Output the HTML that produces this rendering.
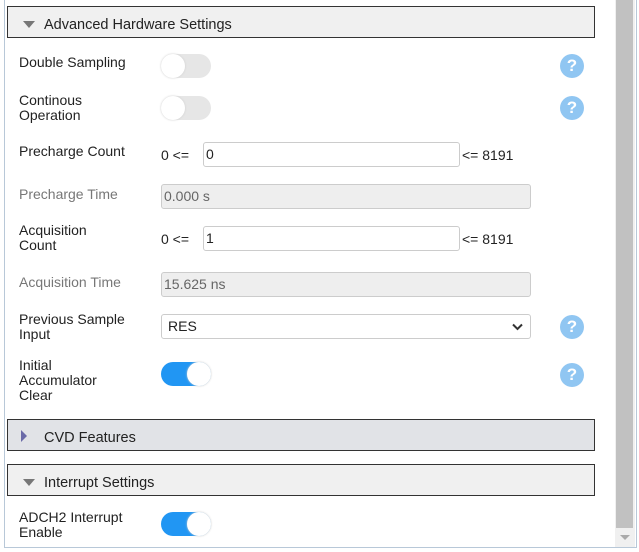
<!DOCTYPE html>
<html><head><style>
body{margin:0;width:639px;height:552px;background:#fff;position:relative;overflow:hidden;font-family:"Liberation Sans",sans-serif;font-size:14px;color:#222}
.a{position:absolute}
.hdr{position:absolute;left:7px;width:586px;height:30px;border:1px solid #333;background:#f0f0f0}
.hdr span{position:absolute;left:36px;top:10px;font-size:14.5px}
.tri{position:absolute;left:15px;top:14px;width:0;height:0;border-left:6px solid transparent;border-right:6px solid transparent;border-top:7px solid #777}
.lbl{position:absolute;left:19px;line-height:15px;font-size:14px}
.dis{color:#777}
.tg{position:absolute;left:161px;width:50px;height:24px;border-radius:12px;background:#e6e6e6}
.tg::after{content:"";position:absolute;left:0;top:0;width:24px;height:24px;border-radius:50%;background:#fff;box-shadow:0 0 2px #ccc}
.tg.on{background:#2196f3}
.tg.on::after{left:26px}
.q{position:absolute;left:560px;width:24px;height:24px;border-radius:50%;background:#90c6f2;color:#fff;font-weight:bold;font-size:17px;text-align:center;line-height:24px}
.in{position:absolute;height:25px;border:1px solid #ccc;border-radius:3px;box-sizing:border-box;padding-left:2px;line-height:23px;font-size:14px}
.g{background:#eee;color:#666;left:161px;width:370px}
</style></head><body>
<div class="a" style="left:4px;top:0;width:1px;height:548px;background:#b8c8d8"></div>
<div class="a" style="left:4px;top:547px;width:632px;height:1px;background:#b8c8d8"></div>
<div class="a" style="left:615px;top:0;width:20px;height:547px;background:#f0f0f0"></div>
<div class="a" style="left:616px;top:0;width:17px;height:528px;background:#c1c1c1"></div>
<div class="a" style="left:620px;top:535px;border-left:5px solid transparent;border-right:5px solid transparent;border-top:5px solid #aaa"></div>
<div class="a" style="left:636px;top:0;width:1px;height:548px;background:#b8c8d8"></div>

<div class="hdr" style="top:6px"><div class="tri"></div><span>Advanced Hardware Settings</span></div>

<div class="lbl" style="top:55px">Double Sampling</div>
<div class="tg" style="top:54px"></div><div class="q" style="top:54px">?</div>

<div class="lbl" style="top:93px">Continous<br>Operation</div>
<div class="tg" style="top:96px"></div><div class="q" style="top:96px">?</div>

<div class="lbl" style="top:144px">Precharge Count</div>
<div class="a" style="left:161px;top:147px">0 &lt;=</div>
<div class="in" style="left:203px;top:142px;width:257px">0</div>
<div class="a" style="left:462px;top:147px">&lt;= 8191</div>

<div class="lbl dis" style="top:187px">Precharge Time</div>
<div class="in g" style="top:184px">0.000 s</div>

<div class="lbl" style="top:223px">Acquisition<br>Count</div>
<div class="a" style="left:161px;top:231px">0 &lt;=</div>
<div class="in" style="left:203px;top:226px;width:257px">1</div>
<div class="a" style="left:462px;top:231px">&lt;= 8191</div>

<div class="lbl dis" style="top:275px">Acquisition Time</div>
<div class="in g" style="top:272px">15.625 ns</div>

<div class="lbl" style="top:312px">Previous Sample<br>Input</div>
<div class="in" style="left:161px;top:314px;width:370px;padding-left:6px">RES<svg style="position:absolute;right:7px;top:8px" width="11" height="8" viewBox="0 0 11 8"><path d="M1 1.5L5.5 6L10 1.5" stroke="#333" stroke-width="2" fill="none"/></svg></div>
<div class="q" style="top:315px">?</div>

<div class="lbl" style="top:358px">Initial<br>Accumulator<br>Clear</div>
<div class="tg on" style="top:362px"></div><div class="q" style="top:363px">?</div>

<div class="hdr" style="top:419px;background:#e1e3e7"><div class="a" style="left:13px;top:10px;border-top:6px solid transparent;border-bottom:6px solid transparent;border-left:6px solid #6a6aa8"></div><span>CVD Features</span></div>

<div class="hdr" style="top:464px"><div class="tri"></div><span>Interrupt Settings</span></div>

<div class="lbl" style="top:510px">ADCH2 Interrupt<br>Enable</div>
<div class="tg on" style="top:512px"></div>
</body></html>
